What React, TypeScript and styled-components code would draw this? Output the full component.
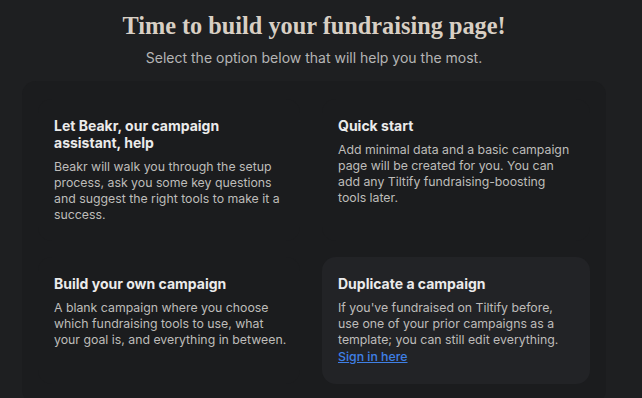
import React from "react";
import styled, { createGlobalStyle } from "styled-components";

const Global = createGlobalStyle`
  html, body { margin: 0; padding: 0; background: #1e1f21; }
  body { font-family: Inter, "Noto Sans", sans-serif; overflow: hidden; }
`;

const Page = styled.div`
  width: 628px;
  height: 398px;
  background: #1e1f21;
  box-sizing: border-box;
  padding-top: 11px;
  display: flex;
  flex-direction: column;
  align-items: center;
  overflow: hidden;
`;

const Heading = styled.h1`
  margin: 0;
  font-family: "Liberation Serif", "DejaVu Serif", serif;
  font-weight: 700;
  font-size: 24.3px;
  line-height: 30px;
  color: #d8cfc4;
`;

const Sub = styled.p`
  margin: 8px 0 0;
  font-size: 14px;
  line-height: 18px;
  color: #b5b5b5;
`;

const Panel = styled.div`
  margin-top: 14px;
  width: 584px;
  box-sizing: border-box;
  background: #1b1c1e;
  border-radius: 14px;
  padding: 18px 16px 20px 16px;
  display: grid;
  grid-template-columns: 262px 268px;
  column-gap: 22px;
  row-gap: 16px;
`;

const Card = styled.div<{ $active?: boolean }>`
  background: ${(p) => (p.$active ? "#222326" : "#1b1c1e")};
  border-radius: 14px;
  padding: 18px 6px 18px 16px;
`;

const CardTitle = styled.h2`
  margin: 0 0 8px;
  font-size: 14px;
  line-height: 17px;
  font-weight: 700;
  color: #ebebeb;
`;

const CardText = styled.p<{ $width: number }>`
  margin: 0;
  max-width: ${(p) => p.$width}px;
  font-size: 12.3px;
  line-height: 16px;
  color: #bebcba;
`;

const Link = styled.a`
  color: #3f80e6;
  text-decoration: underline;
  font-weight: 500;
  line-height: 18px;
`;

export default function App() {
  return (
    <Page>
      <Global />
      <Heading>Time to build your fundraising page!</Heading>
      <Sub>Select the option below that will help you the most.</Sub>
      <Panel>
        <Card>
          <CardTitle>
            Let Beakr, our campaign
            <br />
            assistant, help
          </CardTitle>
          <CardText $width={235}>
            Beakr will walk you through the setup process, ask you some key questions and suggest the
            right tools to make it a success.
          </CardText>
        </Card>
        <Card>
          <CardTitle>Quick start</CardTitle>
          <CardText $width={232}>
            Add minimal data and a basic campaign page will be created for you. You can add any
            Tiltify fundraising-boosting tools later.
          </CardText>
        </Card>
        <Card>
          <CardTitle>Build your own campaign</CardTitle>
          <CardText $width={235}>
            A blank campaign where you choose which fundraising tools to use, what your goal is, and
            everything in between.
          </CardText>
        </Card>
        <Card $active>
          <CardTitle>Duplicate a campaign</CardTitle>
          <CardText $width={232}>
            If you've fundraised on Tiltify before, use one of your prior campaigns as a template; you
            can still edit everything.
            <br />
            <Link href="#">Sign in here</Link>
          </CardText>
        </Card>
      </Panel>
    </Page>
  );
}
